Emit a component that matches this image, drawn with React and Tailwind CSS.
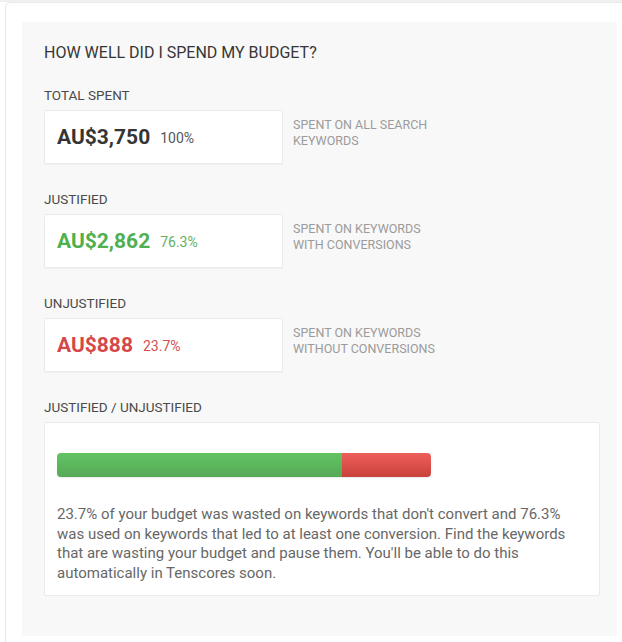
const STATS = [
  {
    label: 'TOTAL SPENT',
    amount: 'AU$3,750',
    share: '100%',
    amountClass: 'text-[#353535]',
    shareClass: 'text-[#555555]',
    note: ['SPENT ON ALL SEARCH', 'KEYWORDS'],
  },
  {
    label: 'JUSTIFIED',
    amount: 'AU$2,862',
    share: '76.3%',
    amountClass: 'text-[#4fb04f]',
    shareClass: 'text-[#62b062]',
    note: ['SPENT ON KEYWORDS', 'WITH CONVERSIONS'],
  },
  {
    label: 'UNJUSTIFIED',
    amount: 'AU$888',
    share: '23.7%',
    amountClass: 'text-[#d64848]',
    shareClass: 'text-[#d45050]',
    note: ['SPENT ON KEYWORDS', 'WITHOUT CONVERSIONS'],
  },
]

const JUSTIFIED = 76.3

function Stat({ stat }) {
  return (
    <section>
      <div className="text-[13.5px] leading-[18px] text-[#4a4a4a]">{stat.label}</div>
      <div className="mt-[6px] flex items-start gap-[10px]">
        <div className="flex h-[54px] w-[239px] items-center rounded-[2px] border border-[#ebebeb] bg-white pl-[12px] shadow-[0_1px_1px_rgba(0,0,0,0.04)]">
          <span className={`text-[21px] font-bold leading-none ${stat.amountClass}`}>{stat.amount}</span>
          <span className={`relative top-[1px] ml-[10px] text-[14px] leading-none ${stat.shareClass}`}>{stat.share}</span>
        </div>
        <div className="mt-[7px] text-[12.5px] leading-4 text-[#9b9b9b]">
          {stat.note[0]}
          <br />
          {stat.note[1]}
        </div>
      </div>
    </section>
  )
}

export default function App() {
  return (
    <div className="min-h-[642px] overflow-hidden border-t-2 border-[#f0f0f0] bg-white font-[Roboto,sans-serif]">
      <div className="ml-[5px] min-h-[640px] rounded-tl-[5px] border-l border-t border-[#e9e9e9] pl-[16px] pr-[5px] pt-[19px]">
        <div className="bg-[#f8f8f8] pb-[40px] pl-[22px] pr-[17px] pt-[21px]">
          <h2 className="text-[16px] leading-[20px] text-[#363636]">HOW WELL DID I SPEND MY BUDGET?</h2>

          <div className="mt-[23px] flex flex-col gap-[26px]">
            {STATS.map((stat) => (
              <Stat key={stat.label} stat={stat} />
            ))}

            <section>
              <div className="text-[13.5px] leading-[18px] text-[#4a4a4a]">JUSTIFIED / UNJUSTIFIED</div>
              <div className="mt-[6px] rounded-[2px] border border-[#ebebeb] bg-white pb-[12px] pl-[12px] pr-[8px] pt-[30px]">
                <div className="flex h-[24px] w-[374px] overflow-hidden rounded-[4px] shadow-[0_1px_1px_rgba(0,0,0,0.08)]">
                  <div className="bg-linear-to-b from-[#62c462] to-[#57a957]" style={{ width: `${JUSTIFIED}%` }} />
                  <div className="flex-1 bg-linear-to-b from-[#ee5f5b] to-[#c9413c]" />
                </div>
                <p className="mt-[28px] text-[15px] leading-[19.5px] text-[#676767]">
                  23.7% of your budget was wasted on keywords that don't convert and 76.3%
                  <br />
                  was used on keywords that led to at least one conversion. Find the keywords
                  <br />
                  that are wasting your budget and pause them. You'll be able to do this
                  <br />
                  automatically in Tenscores soon.
                </p>
              </div>
            </section>
          </div>
        </div>
      </div>
    </div>
  )
}
